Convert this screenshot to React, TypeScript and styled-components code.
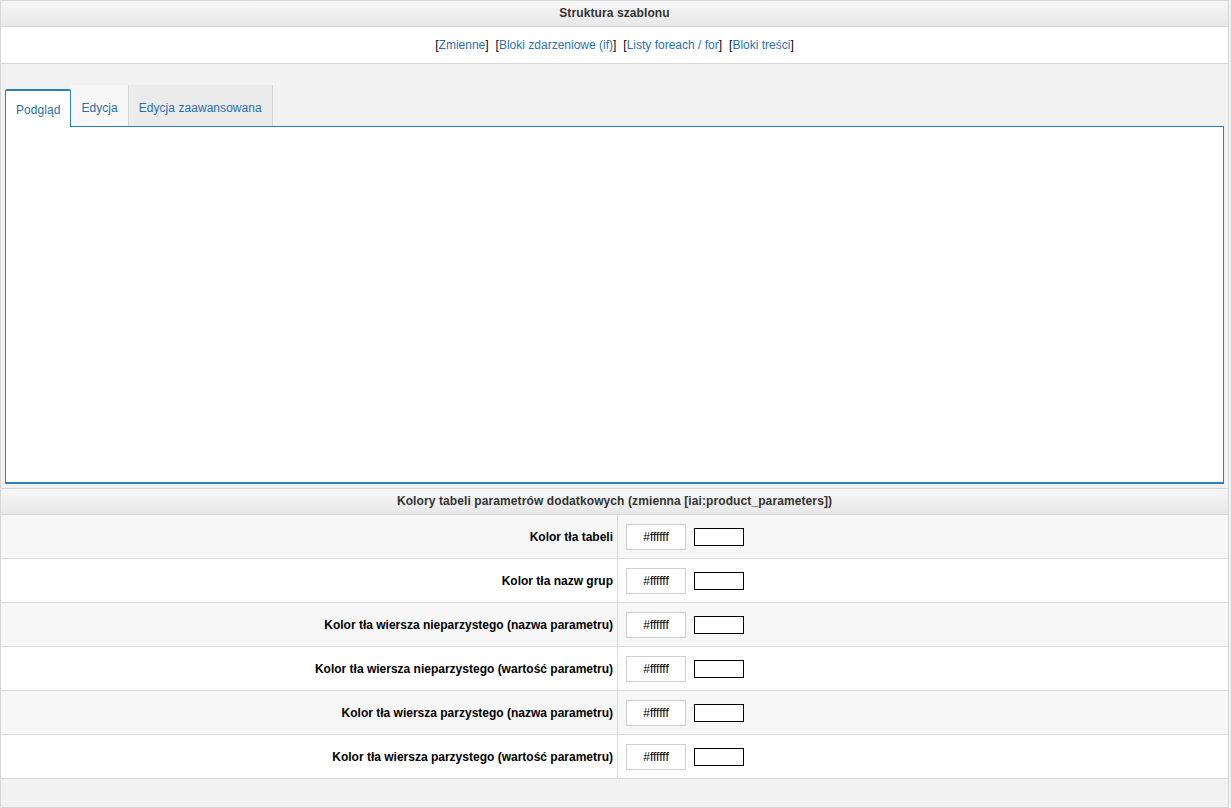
import React from 'react';
import styled, { createGlobalStyle } from 'styled-components';

const GlobalStyle = createGlobalStyle`
  html, body {
    margin: 0;
    padding: 0;
    background: #f2f2f2;
    font-family: "Liberation Sans", Arial, Helvetica, sans-serif;
    font-size: 12px;
    color: #000;
  }
  * { box-sizing: border-box; }
`;

const Wrapper = styled.div`
  width: 1229px;
  height: 808px;
  border: 1px solid #d6d6d6;
  background: #f2f2f2;
  display: flex;
  flex-direction: column;
`;

const SectionHeader = styled.div<{ $top?: boolean }>`
  height: ${p => (p.$top ? '26px' : '27px')};
  line-height: 25px;
  text-align: center;
  font-weight: bold;
  letter-spacing: 0.1px;
  color: #333;
  background: linear-gradient(#f6f6f6, #e8e8e8);
  border-top: ${p => (p.$top ? 'none' : '1px solid #d6d6d6')};
  border-bottom: 1px solid #d6d6d6;
`;

const LinksBar = styled.div`
  height: 37px;
  background: #fff;
  border-bottom: 1px solid #d6d6d6;
  display: flex;
  justify-content: center;
  align-items: center;
  gap: 7px;
  padding-bottom: 1px;
`;

const LinkItem = styled.span`
  color: #000;
  a {
    color: #2a72b5;
    text-decoration: none;
  }
`;

const TabsArea = styled.div`
  padding: 21px 4px 0 4px;
`;

const TabList = styled.div`
  display: flex;
  align-items: flex-end;
  height: 41px;
`;

const Tab = styled.div<{ $active?: boolean; $bg?: string }>`
  display: flex;
  align-items: center;
  padding: 0 10px;
  color: #2a6fa9;
  letter-spacing: 0.05px;
  height: ${p => (p.$active ? '38px' : '41px')};
  padding-top: ${p => (p.$active ? '2px' : '4px')};
  background: ${p => (p.$active ? '#fff' : p.$bg)};
  border: ${p => (p.$active ? '1px solid #2a80c0' : 'none')};
  border-top-width: ${p => (p.$active ? '2px' : '0')};
  border-bottom: none;
  border-right: ${p => (p.$active ? '1px solid #2a80c0' : '1px solid #d6d6d6')};
  border-radius: ${p => (p.$active ? '2px 2px 0 0' : '0')};
  margin-bottom: ${p => (p.$active ? '-1px' : '0')};
  position: relative;
  z-index: ${p => (p.$active ? 1 : 0)};
`;

const Preview = styled.div`
  height: 358px;
  background: #fff;
  border: 1px solid #2a80c0;
  border-bottom-width: 2px;
`;

const Gap = styled.div`
  height: 4px;
`;

const Row = styled.div<{ $odd?: boolean }>`
  display: flex;
  height: 44px;
  background: ${p => (p.$odd ? '#f7f7f7' : '#fff')};
  border-bottom: 1px solid #d9d9d9;
`;

const Label = styled.div`
  width: 617px;
  border-right: 1px solid #d9d9d9;
  display: flex;
  align-items: center;
  justify-content: flex-end;
  padding-right: 4px;
  font-weight: bold;
`;

const Field = styled.div`
  display: flex;
  align-items: center;
  padding-left: 8px;
  gap: 8px;
`;

const HexInput = styled.div`
  width: 60px;
  height: 26px;
  border: 1px solid #cfcfcf;
  background: #fff;
  display: flex;
  align-items: center;
  justify-content: center;
  font-size: 12px;
  color: #000;
`;

const Swatch = styled.div<{ $color: string }>`
  width: 50px;
  height: 18px;
  border: 1px solid #000;
  background: ${p => p.$color};
`;

const links = ['Zmienne', 'Bloki zdarzeniowe (if)', 'Listy foreach / for', 'Bloki treści'];

const rows = [
  'Kolor tła tabeli',
  'Kolor tła nazw grup',
  'Kolor tła wiersza nieparzystego (nazwa parametru)',
  'Kolor tła wiersza nieparzystego (wartość parametru)',
  'Kolor tła wiersza parzystego (nazwa parametru)',
  'Kolor tła wiersza parzystego (wartość parametru)',
];

export default function App() {
  return (
    <>
      <GlobalStyle />
      <Wrapper>
        <SectionHeader $top>Struktura szablonu</SectionHeader>
        <LinksBar>
          {links.map(l => (
            <LinkItem key={l}>
              [<a href="#">{l}</a>]
            </LinkItem>
          ))}
        </LinksBar>
        <TabsArea>
          <TabList>
            <Tab $active>Podgląd</Tab>
            <Tab $bg="#f7f7f7">Edycja</Tab>
            <Tab $bg="#ebebeb">Edycja zaawansowana</Tab>
          </TabList>
          <Preview />
        </TabsArea>
        <Gap />
        <SectionHeader>Kolory tabeli parametrów dodatkowych (zmienna [iai:product_parameters])</SectionHeader>
        {rows.map((r, i) => (
          <Row key={r} $odd={i % 2 === 0}>
            <Label>{r}</Label>
            <Field>
              <HexInput>#ffffff</HexInput>
              <Swatch $color="#ffffff" />
            </Field>
          </Row>
        ))}
      </Wrapper>
    </>
  );
}
